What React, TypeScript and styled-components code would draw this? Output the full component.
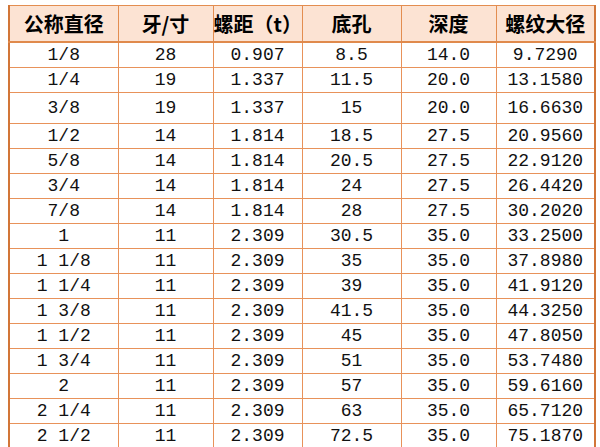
import styled, { createGlobalStyle } from "styled-components";

const Global = createGlobalStyle`
  html, body { margin: 0; padding: 0; background: #fff; overflow: hidden; }
`;

const Page = styled.div`
  padding: 5px 0 0 8px;
  width: 600px;
  height: 447px;
  box-sizing: border-box;
  overflow: hidden;
`;

const Table = styled.table`
  border-collapse: collapse;
  table-layout: fixed;
  width: 586px;
  border-left: 2px solid #d27638;
  border-right: 2px solid #d27638;
  border-top: 1px solid #e08a4c;
`;

const HeadCell = styled.th`
  height: 35px;
  padding: 0;
  background: #fce3d3;
  border: 1px solid #e38d50;
  border-bottom: 2px solid #e08a4c;
  font-family: "Noto Sans CJK SC", "Noto Sans", sans-serif;
  font-weight: 700;
  font-size: 20px;
  color: #000;
  text-align: center;
  vertical-align: middle;
  white-space: pre;
`;

const Row = styled.tr<{ $tall?: boolean }>`
  height: ${(p) => (p.$tall ? 31 : 25)}px;
`;

const Cell = styled.td`
  padding: 0;
  border: 1px solid #e8925a;
  font-family: "Liberation Mono", "Noto Sans CJK SC", monospace;
  font-size: 18px;
  color: #111;
  text-align: center;
  vertical-align: middle;
  white-space: pre;
  line-height: 1;
`;

const widths = [109, 95, 89, 99, 95, 99];
const heads = ["公称直径", "牙/寸", "螺距（t）", "底孔", "深度", "螺纹大径"];

const rows: string[][] = [
  ["1/8", "28", "0.907", "8.5", "14.0", "9.7290"],
  ["1/4", "19", "1.337", "11.5", "20.0", "13.1580"],
  ["3/8", "19", "1.337", "15", "20.0", "16.6630"],
  ["1/2", "14", "1.814", "18.5", "27.5", "20.9560"],
  ["5/8", "14", "1.814", "20.5", "27.5", "22.9120"],
  ["3/4", "14", "1.814", "24", "27.5", "26.4420"],
  ["7/8", "14", "1.814", "28", "27.5", "30.2020"],
  ["1", "11", "2.309", "30.5", "35.0", "33.2500"],
  ["1 1/8", "11", "2.309", "35", "35.0", "37.8980"],
  ["1 1/4", "11", "2.309", "39", "35.0", "41.9120"],
  ["1 3/8", "11", "2.309", "41.5", "35.0", "44.3250"],
  ["1 1/2", "11", "2.309", "45", "35.0", "47.8050"],
  ["1 3/4", "11", "2.309", "51", "35.0", "53.7480"],
  ["2", "11", "2.309", "57", "35.0", "59.6160"],
  ["2 1/4", "11", "2.309", "63", "35.0", "65.7120"],
  ["2 1/2", "11", "2.309", "72.5", "35.0", "75.1870"],
];

export default function App() {
  return (
    <Page>
      <Global />
      <Table>
        <colgroup>
          {widths.map((w, i) => (
            <col key={i} style={{ width: w }} />
          ))}
        </colgroup>
        <thead>
          <tr>
            {heads.map((h) => (
              <HeadCell key={h}>{h}</HeadCell>
            ))}
          </tr>
        </thead>
        <tbody>
          {rows.map((r) => (
            <Row key={r[0]} $tall={r[0] === "3/8"}>
              {r.map((c, i) => (
                <Cell key={i}>{c}</Cell>
              ))}
            </Row>
          ))}
        </tbody>
      </Table>
    </Page>
  );
}
